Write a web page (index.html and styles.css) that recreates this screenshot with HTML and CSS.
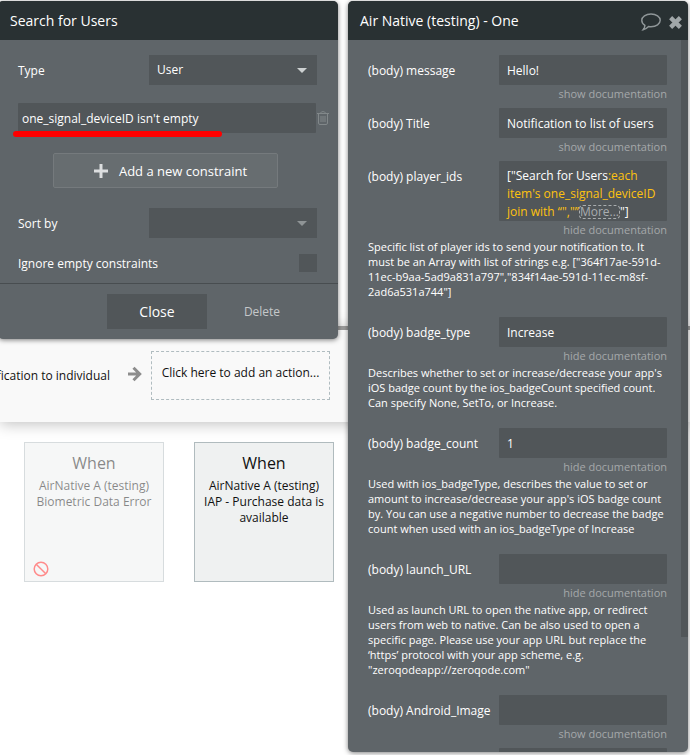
FILE: index.html
```html
<!DOCTYPE html>
<html lang="en">
<head>
    <meta charset="utf-8">
    <title>Workflow editor</title>
    <link rel="stylesheet" href="styles.css">
</head>
<body>
    <main class="workflow">
        <section class="actions">
            <p class="action-name">fication to individual</p>
            <svg class="arrow" viewBox="0 0 14 16" aria-hidden="true">
                <path d="M0 8h10.500M5.500 1.800l6.200 6.200l-6.200 6.200" fill="none" stroke="#8d8d8d" stroke-width="3"/>
            </svg>
            <button class="add-action">Click here to add an action...</button>
        </section>
        <section class="events">
            <article class="event disabled">
                <h2>When</h2>
                <p>AirNative A (testing) Biometric Data Error</p>
                <svg class="ban" viewBox="0 0 16 16" aria-hidden="true">
                    <circle cx="8" cy="8" r="6.800"/>
                    <path d="M3.200 3.200l9.600 9.600"/>
                </svg>
            </article>
            <article class="event">
                <h2>When</h2>
                <p>AirNative A (testing) IAP - Purchase data is available</p>
            </article>
        </section>
    </main>

    <div class="panel search-panel">
        <header class="panel-header"><h1>Search for Users</h1></header>
        <div class="panel-body">
            <div class="row">
                <label for="type">Type</label>
                <div class="dropdown">
                    <select id="type"><option>User</option></select>
                </div>
            </div>
            <div class="constraint">
                <input type="text" class="field" value="one_signal_deviceID isn't empty" aria-label="Constraint">
                <button class="icon-button" aria-label="Remove constraint">
                    <svg width="12" height="14" viewBox="0 0 12 14">
                        <path d="M0 2.500h12M3.500 2.500c0-2.500 5-2.500 5 0M1.500 2.500v9.500q0 1.500 1.500 1.500h6q1.500 0 1.500-1.500V2.500M4 5v6M6 5v6M8 5v6" fill="none" stroke="#82888a"/>
                    </svg>
                </button>
                <span class="underline"></span>
            </div>
            <button class="add-constraint">
                <svg width="14" height="14" viewBox="0 0 14 14" aria-hidden="true">
                    <path d="M7 0v14M0 7h14" stroke="#dcdedf" stroke-width="3"/>
                </svg>
                Add a new constraint
            </button>
            <div class="row">
                <label for="sort">Sort by</label>
                <div class="dropdown empty">
                    <select id="sort"><option></option></select>
                </div>
            </div>
            <div class="row check-row">
                <label for="ignore">Ignore empty constraints</label>
                <input type="checkbox" id="ignore">
            </div>
        </div>
        <footer class="panel-footer">
            <button class="close-button">Close</button>
            <button class="delete-button">Delete</button>
        </footer>
    </div>

    <div class="panel action-panel">
        <header class="panel-header">
            <h1>Air Native (testing) - One</h1>
            <button class="icon-button" aria-label="Comment">
                <svg width="20" height="18" viewBox="0 0 18 16">
                    <path d="M9 .800c4.700 0 8.300 2.500 8.300 5.700s-3.600 5.800-8.300 5.800c-.800 0-1.500-.100-2.200-.200C5.300 13.700 3.700 14.700 1.900 15c.900-1.100 1.500-2.200 1.600-3.900C1.700 10 .700 8.400.700 6.500.700 3.300 4.300.800 9 .800z" fill="none" stroke="#8f9698" stroke-width="1.300"/>
                </svg>
            </button>
            <button class="icon-button" aria-label="Close">
                <svg width="13" height="13" viewBox="0 0 12 12">
                    <path d="M1.500 1.500l9 9M10.500 1.500l-9 9" stroke="#a0a6a8" stroke-width="4"/>
                </svg>
            </button>
        </header>
        <div class="panel-body">
            <div class="param">
                <div class="row">
                    <label for="message">(body) message</label>
                    <input type="text" class="field" id="message" value="Hello!">
                </div>
                <a href="#" class="doc-link">show documentation</a>
            </div>
            <div class="param">
                <div class="row">
                    <label for="title">(body) Title</label>
                    <input type="text" class="field" id="title" value="Notification to list of users">
                </div>
                <a href="#" class="doc-link">show documentation</a>
            </div>
            <div class="param">
                <div class="row">
                    <span class="label" id="playerLabel">(body) player_ids</span>
                    <div class="field expression" role="textbox" aria-labelledby="playerLabel">["Search for Users<span class="operator">:each item's one_signal_deviceID join with “","”</span><button class="more">More...</button>"]</div>
                </div>
                <a href="#" class="doc-link">hide documentation</a>
                <p class="doc">Specific list of player ids to send your notification to. It must be an Array with list of strings e.g. ["364f17ae-591d-11ec-b9aa-5ad9a831a797","834f14ae-591d-11ec-m8sf-2ad6a531a744"]</p>
            </div>
            <div class="param">
                <div class="row">
                    <label for="badgeType">(body) badge_type</label>
                    <input type="text" class="field" id="badgeType" value="Increase">
                </div>
                <a href="#" class="doc-link">hide documentation</a>
                <p class="doc">Describes whether to set or increase/decrease your app's iOS badge count by the ios_badgeCount specified count. Can specify None, SetTo, or Increase.</p>
            </div>
            <div class="param">
                <div class="row">
                    <label for="badgeCount">(body) badge_count</label>
                    <input type="text" class="field" id="badgeCount" value="1">
                </div>
                <a href="#" class="doc-link">hide documentation</a>
                <p class="doc">Used with ios_badgeType, describes the value to set or amount to increase/decrease your app's iOS badge count by. You can use a negative number to decrease the badge count when used with an ios_badgeType of Increase</p>
            </div>
            <div class="param">
                <div class="row">
                    <label for="launchUrl">(body) launch_URL</label>
                    <input type="text" class="field" id="launchUrl">
                </div>
                <a href="#" class="doc-link">hide documentation</a>
                <p class="doc">Used as launch URL to open the native app, or redirect users from web to native. Can be also used to open a specific page. Please use your app URL but replace the ‘https’ protocol with your app scheme, e.g. "zeroqodeapp://zeroqode.com"</p>
            </div>
            <div class="param">
                <div class="row">
                    <label for="androidImage">(body) Android_Image</label>
                    <input type="text" class="field" id="androidImage">
                </div>
                <a href="#" class="doc-link">show documentation</a>
            </div>
            <div class="param">
                <div class="row">
                    <span class="label"></span>
                    <input type="text" class="field" aria-label="Next parameter">
                </div>
            </div>
        </div>
        <div class="scrollbar"></div>
    </div>
</body>
</html>
```

FILE: styles.css
```css
* { box-sizing: border-box; }
body { margin: 0; height: 100vh; overflow: hidden; background: #fff; font: 12px/18px "Open Sans", sans-serif; color: #111; }
h1, h2, p { margin: 0; font-weight: 400; }
button, input, select { font: inherit; color: inherit; border: none; border-radius: 0; margin: 0; padding: 0; background: none; }
button { cursor: pointer; }
svg { display: block; }

/* workflow canvas behind the panels */
.workflow { padding-top: 326px; }
.actions { display: flex; align-items: center; height: 96px; border-top: 4px solid #999; background: #f9f9f9; box-shadow: 0 2px 14px rgba(0, 0, 0, 0.25); }
.action-name { display: flex; justify-content: flex-end; width: 110px; white-space: nowrap; }
.arrow { width: 14px; height: 16px; margin: 0 9px 4px 18px; }
.add-action { width: 179px; height: 49px; margin-bottom: 2px; padding-bottom: 4px; border: 1px dashed #b0bcc0; white-space: nowrap; }
.events { display: flex; gap: 30px; padding: 20px 24px; }
.event { display: flex; flex-direction: column; width: 140px; height: 140px; padding: 10px 8px 4px; border: 1px solid #b0bbbe; background: #eff1f1; text-align: center; line-height: 16px; }
.event h2 { margin-bottom: 5px; font-size: 16px; line-height: 20px; }
.event.disabled { opacity: 0.5; }
.ban { width: 16px; height: 16px; margin-top: auto; fill: none; stroke: #ff1a1a; stroke-width: 1.5; }

/* floating panels */
.panel { position: absolute; top: 1px; display: flex; flex-direction: column; overflow: hidden; border-radius: 5px; background: #5f6569; color: #fff; box-shadow: 0 1px 5px rgba(0, 0, 0, 0.5); }
.search-panel { left: -2px; width: 340px; }
.action-panel { right: 2px; bottom: 3px; width: 340px; }
.panel-header { display: flex; align-items: center; gap: 8px; flex: none; height: 39px; padding: 0 6px 0 12px; background: #293133; }
.panel-header h1 { flex: 1; font-size: 14px; }
.panel-header .icon-button { padding-top: 3px; }
.panel-body { padding: 15px 21px 10px 20px; }
.row { display: flex; justify-content: space-between; }
.row label, .label { height: 30px; line-height: 32px; white-space: nowrap; }
.field, .dropdown { width: 168px; height: 30px; background: #515659; }
.field { padding: 0 8px; border-radius: 1px; }

.dropdown { position: relative; }
.dropdown select { width: 100%; height: 30px; padding: 0 8px; appearance: none; }
.dropdown::after { content: ""; position: absolute; top: 13px; right: 10px; border: 5px solid transparent; border-top-color: #cdd1d2; border-bottom: none; pointer-events: none; }
.dropdown.empty::after { border-top-color: #8f9496; }

.constraint { position: relative; display: flex; align-items: center; margin: 18px -12px 20px 0; }
.constraint .field { flex: 1; margin-right: 1px; padding: 0 4px; }
.underline { position: absolute; left: -5px; bottom: -4px; width: 209px; height: 6px; border-radius: 3px; background: #f00; }
.add-constraint { display: flex; align-items: center; justify-content: center; gap: 11px; width: 225px; height: 35px; margin: 0 auto 20px 35px; padding-left: 10px; border: 1px solid #757a7d; border-radius: 2px; background: #676d70; font-size: 13px; }
.check-row { align-items: center; margin-top: 10px; }
.check-row input { width: 18px; height: 18px; appearance: none; background: #515659; }
.search-panel .panel-body { padding-bottom: 5px; }
.panel-footer { display: flex; padding: 10px 21px 10px 109px; border-top: 1px solid #484d50; }
.close-button { width: 100px; height: 35px; background: #515659; font-size: 14px; }
.delete-button { width: 110px; color: #c5c8c9; }

.action-panel .panel-body { flex: 1; min-height: 0; overflow: hidden; }
.param { display: flex; flex-direction: column; margin-bottom: 7px; }
.param:has(.doc) { margin-bottom: 18px; }
.doc-link { align-self: flex-end; margin-top: 1px; color: #a5a8aa; font-size: 11px; line-height: 15px; text-decoration: none; }
.doc { margin: 2px 0 0; font-size: 11px; line-height: 15px; }
.expression { height: 60px; padding: 6px 8px 0; overflow: hidden; }
.operator { color: #ffc20f; }
.more { height: 14px; border: 1px dashed #a9adaf; border-radius: 4px; color: #a9adaf; line-height: 12px; }
.scrollbar { position: absolute; top: 39px; right: 0; width: 7px; height: 597px; background: #515659; }
```
